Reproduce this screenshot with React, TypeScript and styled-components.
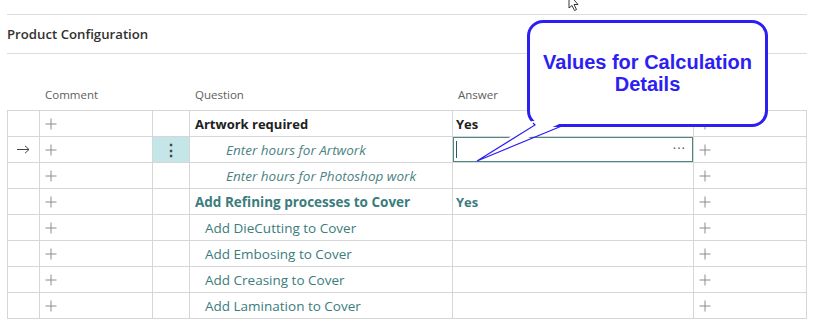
import React from 'react';
import styled, { createGlobalStyle } from 'styled-components';

const GlobalStyle = createGlobalStyle`
  html, body {
    margin: 0;
    padding: 0;
    background: #ffffff;
  }
  body {
    font-family: 'Open Sans', 'Noto Sans', sans-serif;
    color: #212121;
  }
`;

const Page = styled.div`
  position: relative;
  width: 800px;
  padding: 14px 0 0 7px;
  height: 326px;
  overflow: hidden;
`;

const TitleBar = styled.div`
  height: 38px;
  border-top: 1px solid #dcdcdc;
  border-bottom: 1px solid #dcdcdc;
  display: flex;
  align-items: center;
`;

const Title = styled.h2`
  margin: 0;
  font-size: 13.2px;
  font-weight: 600;
  color: #323130;
`;

const Columns = `32px 113px 37px 263px 241px 113px`;

const HeaderRow = styled.div`
  display: grid;
  grid-template-columns: ${Columns};
  height: 56px;
  align-items: end;
  padding-left: 1px;
`;

const HeaderLabel = styled.div`
  font-size: 11.5px;
  line-height: 16px;
  color: #605e5c;
  padding: 0 0 7px 5px;
`;

const Table = styled.div`
  border-left: 1px solid #d6d6d6;
  border-top: 1px solid #d6d6d6;
  width: 799px;
`;

const Row = styled.div`
  display: grid;
  grid-template-columns: ${Columns};
  height: 26px;
`;

const Cell = styled.div<{ $pad?: number; $active?: boolean }>`
  box-sizing: border-box;
  border-right: 1px solid #d6d6d6;
  border-bottom: 1px solid #d6d6d6;
  display: flex;
  align-items: center;
  padding-left: ${(p) => p.$pad ?? 0}px;
  background: ${(p) => (p.$active ? '#c4e6e8' : 'transparent')};
  overflow: hidden;
  white-space: nowrap;
`;

const CenterCell = styled(Cell)`
  justify-content: center;
`;

type Kind = 'head' | 'sub' | 'group' | 'item';

const QuestionText = styled.span<{ $kind: Kind }>`
  font-size: ${(p) => (p.$kind === 'head' ? 13 : 13.5)}px;
  color: ${(p) => (p.$kind === 'head' ? '#212121' : p.$kind === 'sub' ? '#4a8383' : '#3b7c7d')};
  font-weight: ${(p) => (p.$kind === 'head' || p.$kind === 'group' ? 700 : 400)};
  font-style: ${(p) => (p.$kind === 'sub' ? 'italic' : 'normal')};
`;

const AnswerText = styled.span<{ $teal?: boolean }>`
  font-size: 13px;
  font-weight: 700;
  color: ${(p) => (p.$teal ? '#3b7c7d' : '#212121')};
`;

const InputBox = styled.div`
  box-sizing: border-box;
  width: 100%;
  height: 100%;
  border: 1px solid #4f8584;
  display: flex;
  align-items: center;
  justify-content: space-between;
  padding: 0 6px 0 2px;
`;

const Caret = styled.span`
  width: 1px;
  height: 17px;
  background: #2b5d5d;
`;

const Ellipsis = styled.span`
  font-size: 13px;
  letter-spacing: 1px;
  color: #555;
  line-height: 1;
  padding-bottom: 2px;
`;

const Dots = styled.span`
  font-size: 16px;
  font-weight: 700;
  color: #444;
  line-height: 1;
`;

const Plus = () => (
  <svg width="12" height="12" viewBox="0 0 12 12">
    <path d="M6 0.5v11M0.5 6h11" stroke="#8c8c8c" strokeWidth="1" />
  </svg>
);

const Arrow = () => (
  <svg width="13" height="9" viewBox="0 0 13 9">
    <path d="M0 4.5h12M8 0.8l4 3.7-4 3.7" stroke="#444" strokeWidth="1" fill="none" />
  </svg>
);

const Bubble = styled.div`
  position: absolute;
  left: 527px;
  top: 20px;
  width: 241px;
  height: 107px;
  box-sizing: border-box;
  border: 3px solid #2d1ef2;
  border-radius: 16px;
  background: #ffffff;
  padding-top: 28px;
  text-align: center;
  font-family: 'Liberation Sans', Arial, sans-serif;
  font-weight: 700;
  font-size: 20px;
  line-height: 22px;
  color: #2d1ef2;
`;

const Overlay = styled.svg`
  position: absolute;
  left: 0;
  top: 0;
  pointer-events: none;
`;

type RowData = {
  arrow?: boolean;
  active?: boolean;
  question: string;
  kind: Kind;
  answer?: string;
  editing?: boolean;
};

const rows: RowData[] = [
  { question: 'Artwork required', kind: 'head', answer: 'Yes' },
  { arrow: true, active: true, question: 'Enter hours for Artwork', kind: 'sub', editing: true },
  { question: 'Enter hours for Photoshop work', kind: 'sub' },
  { question: 'Add Refining processes to Cover', kind: 'group', answer: 'Yes' },
  { question: 'Add DieCutting to Cover', kind: 'item' },
  { question: 'Add Embosing to Cover', kind: 'item' },
  { question: 'Add Creasing to Cover', kind: 'item' },
  { question: 'Add Lamination to Cover', kind: 'item' },
];

const pad: Record<Kind, number> = { head: 5, group: 5, sub: 36, item: 15 };

export default function App() {
  return (
    <Page>
      <GlobalStyle />
      <TitleBar>
        <Title>Product Configuration</Title>
      </TitleBar>
      <HeaderRow>
        <span />
        <HeaderLabel>Comment</HeaderLabel>
        <span />
        <HeaderLabel>Question</HeaderLabel>
        <HeaderLabel>Answer</HeaderLabel>
        <span />
      </HeaderRow>
      <Table>
        {rows.map((r, i) => (
          <Row key={i}>
            <CenterCell>{r.arrow && <Arrow />}</CenterCell>
            <Cell $pad={5}>
              <Plus />
            </Cell>
            <CenterCell $active={r.active}>{r.active && <Dots>⋮</Dots>}</CenterCell>
            <Cell $pad={pad[r.kind]}>
              <QuestionText $kind={r.kind}>{r.question}</QuestionText>
            </Cell>
            <Cell $pad={r.editing ? 0 : 3}>
              {r.editing ? (
                <InputBox>
                  <Caret />
                  <Ellipsis>···</Ellipsis>
                </InputBox>
              ) : (
                r.answer && <AnswerText $teal={r.kind === 'group'}>{r.answer}</AnswerText>
              )}
            </Cell>
            <Cell $pad={5}>
              <Plus />
            </Cell>
          </Row>
        ))}
      </Table>

      <Bubble>
        Values for Calculation
        <br />
        Details
      </Bubble>
      <Overlay width="813" height="326" viewBox="0 0 813 326">
        <polygon points="532,121 477,161 566,121" fill="#ffffff" />
        <polyline points="533,123 535,125 477,161 563,125.5" fill="none" stroke="#2d1ef2" strokeWidth="1.2" />
        <path
          d="M569 -6 L569 8 L572 5.5 L574.5 10.5 L576.5 9.5 L574 4.5 L578 4.5 Z"
          fill="#ffffff"
          stroke="#222"
          strokeWidth="0.9"
        />
      </Overlay>
    </Page>
  );
}
